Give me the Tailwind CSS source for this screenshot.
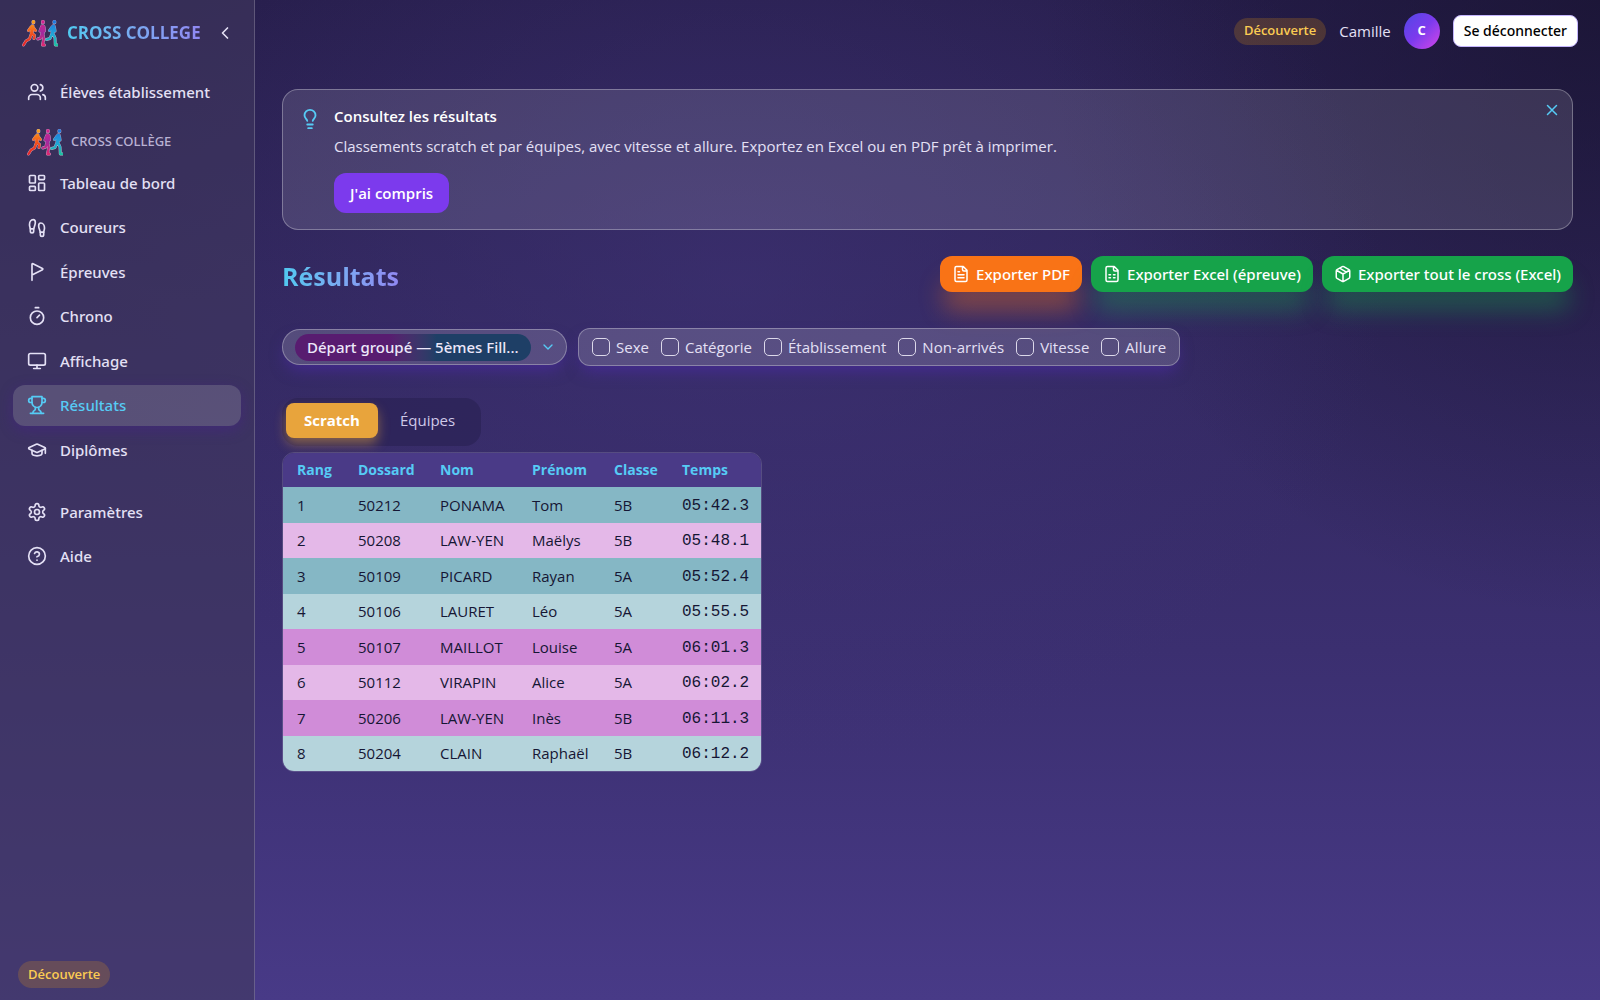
<!DOCTYPE html>
<html lang="fr">

<head>
  <meta charset="UTF-8">
  <meta name="viewport" content="width=device-width, initial-scale=1.0">
  <title>Cross Collège - Résultats</title>
  <script src="https://cdn.jsdelivr.net/npm/@tailwindcss/browser@4"></script>
</head>

<body
  class="flex min-h-screen bg-[radial-gradient(ellipse_650px_500px_at_46%_28%,#41347a88,transparent),radial-gradient(ellipse_560px_620px_at_100%_0%,#17122eaa,transparent),linear-gradient(180deg,#271e4c,#31275d_30%,#3b2f70_65%,#483a87)] font-['Open_Sans','Noto_Sans',sans-serif] text-[15px] text-[#e4e0f5]">

  <!-- icones partagées -->
  <svg class="absolute size-0" aria-hidden="true">
    <defs>
      <linearGradient id="fire" gradientUnits="userSpaceOnUse" x1="0" y1="0" x2="0" y2="28">
        <stop offset="0" stop-color="#fbb11d" />
        <stop offset=".5" stop-color="#f2541c" />
        <stop offset="1" stop-color="#e11d2e" />
      </linearGradient>
      <linearGradient id="berry" gradientUnits="userSpaceOnUse" x1="0" y1="0" x2="0" y2="28">
        <stop offset="0" stop-color="#e0218a" />
        <stop offset=".5" stop-color="#a02a9e" />
        <stop offset="1" stop-color="#e5286c" />
      </linearGradient>
      <linearGradient id="sea" gradientUnits="userSpaceOnUse" x1="0" y1="0" x2="0" y2="28">
        <stop offset="0" stop-color="#1d6fe0" />
        <stop offset=".55" stop-color="#22a5d6" />
        <stop offset="1" stop-color="#1fc79a" />
      </linearGradient>
      <path id="run1" d="M11 2.500h.8v1.200H11zM10 7l-.8 7M11 7l-.8 7M11 8l2.500 3.500M9 8l-2.500 3.500M10 14.500l2.500 2-.5 3M9.500 14.500 7.500 20 4 22l-2.500 4" />
      <path id="run2" d="M20.500 2.500h.8v1.200h-.8zM20 7l-.2 7M21.300 7v7M19.500 8 18 12M22 8l.5 4M20.800 14.500l1 5-1.300 6.500h2M19.800 14.500l-1 4.500-3 1" />
      <path id="run3" d="M32 2.500h.8v1.200H32zM31 7l-1 7M32 7l-1 7M30 8l-2.500 3.500M32.500 8.500l.5 3.500M30 14.500l-2 5-3.500 1M31 14.500l2 4.500.3 7h2" />
      <symbol id="runners" viewBox="0 0 36 28">
        <g fill="none" stroke-linecap="round" stroke-linejoin="round">
          <g stroke="#e9d3ee" stroke-opacity=".75" stroke-width="3">
            <use href="#run1" /><use href="#run2" /><use href="#run3" />
          </g>
          <g stroke-width="2.300">
            <use href="#run1" stroke="url(#fire)" />
            <use href="#run2" stroke="url(#berry)" />
            <use href="#run3" stroke="url(#sea)" />
          </g>
        </g>
      </symbol>
    </defs>
  </svg>

  <aside class="flex w-[255px] shrink-0 flex-col border-r border-white/20 bg-[#41385f]/60 px-[13px]">
    <div class="flex h-[66px] items-center gap-[9px] pl-[9px]">
      <svg class="h-7 w-9 shrink-0"><use href="#runners" /></svg>
      <span
        class="bg-linear-to-r from-[#4fc9f0] to-[#9088f2] bg-clip-text text-[17px] font-bold whitespace-nowrap text-transparent">CROSS
        COLLEGE</span>
      <button type="button" aria-label="Réduire le menu" class="ml-auto flex h-9 w-8 items-center justify-center">
        <svg class="size-5" viewBox="0 0 24 24" fill="none" stroke="currentColor" stroke-width="2"
          stroke-linecap="round" stroke-linejoin="round">
          <path d="m15 18-6-6 6-6" />
        </svg>
      </button>
    </div>

    <nav class="flex flex-col pt-1.5 font-['Noto_Sans',sans-serif] font-medium">
      <a href="#" class="flex h-10 items-center gap-[13px] rounded-xl px-3.5">
        <svg class="size-5" viewBox="0 0 24 24" fill="none" stroke="currentColor" stroke-width="2"
          stroke-linecap="round" stroke-linejoin="round">
          <path d="M16 21v-2a4 4 0 0 0-4-4H6a4 4 0 0 0-4 4v2" />
          <circle cx="9" cy="7" r="4" />
          <path d="M22 21v-2a4 4 0 0 0-3-3.870M16 3.130a4 4 0 0 1 0 7.750" />
        </svg>
        Élèves établissement
      </a>

      <div class="mt-4 flex h-7 items-center gap-2 pl-3.5 text-[13px] text-[#b9b2d3]">
        <svg class="h-7 w-9"><use href="#runners" /></svg>
        CROSS COLLÈGE
      </div>

      <div class="mt-[7px] grid h-[307px] auto-rows-fr gap-1">
        <a href="#" class="flex items-center gap-[13px] rounded-xl px-3.5">
          <svg class="size-5" viewBox="0 0 24 24" fill="none" stroke="currentColor" stroke-width="2"
            stroke-linecap="round" stroke-linejoin="round">
            <rect width="7" height="9" x="3" y="3" rx="1" />
            <rect width="7" height="5" x="14" y="3" rx="1" />
            <rect width="7" height="9" x="14" y="12" rx="1" />
            <rect width="7" height="5" x="3" y="16" rx="1" />
          </svg>
          Tableau de bord
        </a>
        <a href="#" class="flex items-center gap-[13px] rounded-xl px-3.5">
          <svg class="size-5" viewBox="0 0 24 24" fill="none" stroke="currentColor" stroke-width="2"
            stroke-linecap="round" stroke-linejoin="round">
            <path
              d="M4 16v-2.380C4 11.500 2.970 10.500 3 8c.03-2.720 1.490-6 4.500-6C9.370 2 10 3.800 10 5.500c0 3.110-2 5.660-2 8.680V16a2 2 0 1 1-4 0Z" />
            <path
              d="M20 20v-2.380c0-2.120 1.030-3.120 1-5.620-.03-2.720-1.490-6-4.500-6C14.630 6 14 7.800 14 9.500c0 3.110 2 5.660 2 8.680V20a2 2 0 1 0 4 0Z" />
            <path d="M16 17h4M4 13h4" />
          </svg>
          Coureurs
        </a>
        <a href="#" class="flex items-center gap-[13px] rounded-xl px-3.5">
          <svg class="size-5" viewBox="0 0 24 24" fill="none" stroke="currentColor" stroke-width="2"
            stroke-linecap="round" stroke-linejoin="round">
            <path d="M6 22V2.800a.8.8 0 0 1 1.170-.71l11.380 5.690a.8.8 0 0 1 0 1.440L6 15.500" />
          </svg>
          Épreuves
        </a>
        <a href="#" class="flex items-center gap-[13px] rounded-xl px-3.5">
          <svg class="size-5" viewBox="0 0 24 24" fill="none" stroke="currentColor" stroke-width="2"
            stroke-linecap="round" stroke-linejoin="round">
            <path d="M10 2h4M12 14l3-3" />
            <circle cx="12" cy="14" r="8" />
          </svg>
          Chrono
        </a>
        <a href="#" class="flex items-center gap-[13px] rounded-xl px-3.5">
          <svg class="size-5" viewBox="0 0 24 24" fill="none" stroke="currentColor" stroke-width="2"
            stroke-linecap="round" stroke-linejoin="round">
            <rect width="20" height="14" x="2" y="3" rx="2" />
            <path d="M8 21h8M12 17v4" />
          </svg>
          Affichage
        </a>
        <a href="#" aria-current="page"
          class="flex items-center gap-[13px] rounded-xl bg-white/15 px-3.5 text-[#56cbf5] shadow-[0_4px_14px_#4c1d9566]">
          <svg class="size-5" viewBox="0 0 24 24" fill="none" stroke="currentColor" stroke-width="2"
            stroke-linecap="round" stroke-linejoin="round">
            <path d="M6 9H4.500a2.500 2.500 0 0 1 0-5H6M18 9h1.500a2.500 2.500 0 0 0 0-5H18M4 22h16" />
            <path d="M10 14.660V17c0 .55-.47.980-.97 1.210C7.850 18.750 7 20.240 7 22" />
            <path d="M14 14.660V17c0 .55.470.980.970 1.210C16.150 18.750 17 20.240 17 22" />
            <path d="M18 2H6v7a6 6 0 0 0 12 0V2Z" />
          </svg>
          Résultats
        </a>
        <a href="#" class="flex items-center gap-[13px] rounded-xl px-3.5">
          <svg class="size-5" viewBox="0 0 24 24" fill="none" stroke="currentColor" stroke-width="2"
            stroke-linecap="round" stroke-linejoin="round">
            <path
              d="M21.420 10.922a1 1 0 0 0-.019-1.838L12.830 5.180a2 2 0 0 0-1.660 0L2.600 9.080a1 1 0 0 0 0 1.832l8.570 3.908a2 2 0 0 0 1.660 0z" />
            <path d="M22 10v6M6 12.500V16a6 3 0 0 0 12 0v-3.500" />
          </svg>
          Diplômes
        </a>
      </div>

      <div class="mt-[22px] flex flex-col gap-1">
        <a href="#" class="flex h-10 items-center gap-[13px] rounded-xl px-3.5">
          <svg class="size-5" viewBox="0 0 24 24" fill="none" stroke="currentColor" stroke-width="2"
            stroke-linecap="round" stroke-linejoin="round">
            <path
              d="M12.220 2h-.44a2 2 0 0 0-2 2v.18a2 2 0 0 1-1 1.730l-.43.25a2 2 0 0 1-2 0l-.15-.08a2 2 0 0 0-2.730.73l-.22.38a2 2 0 0 0 .73 2.730l.15.1a2 2 0 0 1 1 1.720v.51a2 2 0 0 1-1 1.740l-.15.09a2 2 0 0 0-.73 2.730l.22.38a2 2 0 0 0 2.730.73l.15-.08a2 2 0 0 1 2 0l.43.25a2 2 0 0 1 1 1.730V20a2 2 0 0 0 2 2h.44a2 2 0 0 0 2-2v-.18a2 2 0 0 1 1-1.730l.43-.25a2 2 0 0 1 2 0l.15.08a2 2 0 0 0 2.730-.73l.22-.39a2 2 0 0 0-.73-2.730l-.15-.08a2 2 0 0 1-1-1.740v-.5a2 2 0 0 1 1-1.740l.15-.09a2 2 0 0 0 .73-2.730l-.22-.38a2 2 0 0 0-2.730-.73l-.15.08a2 2 0 0 1-2 0l-.43-.25a2 2 0 0 1-1-1.730V4a2 2 0 0 0-2-2z" />
            <circle cx="12" cy="12" r="3" />
          </svg>
          Paramètres
        </a>
        <a href="#" class="flex h-10 items-center gap-[13px] rounded-xl px-3.5">
          <svg class="size-5" viewBox="0 0 24 24" fill="none" stroke="currentColor" stroke-width="2"
            stroke-linecap="round" stroke-linejoin="round">
            <circle cx="12" cy="12" r="10" />
            <path d="M9.090 9a3 3 0 0 1 5.830 1c0 2-3 3-3 3M12 17h.01" />
          </svg>
          Aide
        </a>
      </div>
    </nav>

    <span
      class="mt-auto mb-3 ml-[5px] flex h-[27px] items-center self-start rounded-full bg-[#f59e0b]/20 px-2.5 text-[13px] font-semibold text-[#fbcb52]">Découverte</span>
  </aside>

  <div class="flex min-w-0 grow flex-col">
    <header class="flex h-[62px] items-center justify-end gap-[13px] pr-[22px]">
      <span
        class="flex h-[27px] items-center rounded-full bg-[#f59e0b]/20 px-2.5 text-[13px] font-semibold text-[#fbcb52]">Découverte</span>
      <span>Camille</span>
      <span
        class="flex size-9 items-center justify-center rounded-full bg-linear-to-br from-[#4f46e5] via-[#7c3aed] to-[#d63fe8] text-[13px] font-bold text-white">C</span>
      <button type="button"
        class="h-8 rounded-lg border border-[#c4b5fd] bg-white px-2.5 font-['Noto_Sans',sans-serif] text-sm font-medium text-black">Se
        déconnecter</button>
    </header>

    <main class="flex flex-col px-[27px] pt-[27px]">
      <section
        class="relative flex gap-[13px] rounded-2xl border border-white/30 bg-white/12 pt-3.5 pr-12 pb-4 pl-4">
        <svg class="mt-1 size-[22px] shrink-0 text-[#56cbf5]" viewBox="0 0 24 24" fill="none" stroke="currentColor"
          stroke-width="2" stroke-linecap="round" stroke-linejoin="round">
          <path
            d="M15 14c.2-1 .7-1.700 1.500-2.500 1-.9 1.500-2.200 1.500-3.500A6 6 0 0 0 6 8c0 1 .2 2.200 1.500 3.500.7.7 1.300 1.500 1.500 2.500M9 18h6M10 22h4" />
        </svg>
        <div>
          <h2 class="leading-6 font-semibold text-white">Consultez les résultats</h2>
          <p class="mt-1.5 leading-6">Classements scratch et par équipes, avec vitesse et allure. Exportez en Excel ou
            en PDF prêt à imprimer.</p>
          <button type="button"
            class="mt-[15px] h-10 rounded-xl bg-[#7c3aed] px-4 font-semibold text-white">J'ai compris</button>
        </div>
        <button type="button" aria-label="Fermer" class="absolute top-[9px] right-[9px] p-0.5 text-[#56cbf5]">
          <svg class="size-[18px]" viewBox="0 0 24 24" fill="none" stroke="currentColor" stroke-width="2"
            stroke-linecap="round" stroke-linejoin="round">
            <path d="M18 6 6 18M6 6l12 12" />
          </svg>
        </button>
      </section>

      <div class="mt-[26px] flex items-start justify-between">
        <h1
          class="bg-linear-to-r from-[#4fc9f0] to-[#9088f2] bg-clip-text text-[25px] leading-10 font-bold text-transparent">
          Résultats</h1>
        <div class="flex gap-[9px] font-['Noto_Sans',sans-serif] font-medium text-white">
          <button type="button"
            class="flex h-9 items-center gap-[6px] rounded-xl bg-[#f97316] px-3 shadow-[0_22px_25px_-4px_#f9731666]">
            <svg class="size-[18px]" viewBox="0 0 24 24" fill="none" stroke="currentColor" stroke-width="2"
              stroke-linecap="round" stroke-linejoin="round">
              <path d="M15 2H6a2 2 0 0 0-2 2v16a2 2 0 0 0 2 2h12a2 2 0 0 0 2-2V7ZM14 2v4a2 2 0 0 0 2 2h4" />
              <path d="M10 9H8M16 13H8M16 17H8" />
            </svg>
            Exporter PDF
          </button>
          <button type="button"
            class="flex h-9 items-center gap-[6px] rounded-xl bg-[#16a34a] px-3 shadow-[0_22px_25px_-4px_#16a34a66]">
            <svg class="size-[18px]" viewBox="0 0 24 24" fill="none" stroke="currentColor" stroke-width="2"
              stroke-linecap="round" stroke-linejoin="round">
              <path d="M15 2H6a2 2 0 0 0-2 2v16a2 2 0 0 0 2 2h12a2 2 0 0 0 2-2V7ZM14 2v4a2 2 0 0 0 2 2h4" />
              <path d="M8 13h2M14 13h2M8 17h2M14 17h2" />
            </svg>
            Exporter Excel (épreuve)
          </button>
          <button type="button"
            class="flex h-9 items-center gap-[6px] rounded-xl bg-[#16a34a] px-3 shadow-[0_22px_25px_-4px_#16a34a66]">
            <svg class="size-[18px]" viewBox="0 0 24 24" fill="none" stroke="currentColor" stroke-width="2"
              stroke-linecap="round" stroke-linejoin="round">
              <path
                d="M11 21.730a2 2 0 0 0 2 0l7-4A2 2 0 0 0 21 16V8a2 2 0 0 0-1-1.730l-7-4a2 2 0 0 0-2 0l-7 4A2 2 0 0 0 3 8v8a2 2 0 0 0 1 1.730zM12 22V12M3.300 7 12 12l8.700-5M7.500 4.270l9 5.150" />
            </svg>
            Exporter tout le cross (Excel)
          </button>
        </div>
      </div>

      <div class="mt-8 flex items-center gap-[11px]">
        <div
          class="relative flex h-9 w-[285px] items-center rounded-full border border-white/30 bg-white/16 pl-3 shadow-[0_8px_16px_-4px_#4c2aaaaa]">
          <select aria-label="Épreuve"
            class="h-[27px] w-[236px] appearance-none rounded-full bg-linear-to-r from-[#581c70] from-40% to-[#1e3f66] to-60% px-3 font-['Noto_Sans',sans-serif] font-medium text-[#ece8fa]">
            <option>Départ groupé — 5èmes Fill...</option>
          </select>
          <svg class="pointer-events-none absolute right-2.5 size-4 text-[#56cbf5]" viewBox="0 0 24 24" fill="none"
            stroke="currentColor" stroke-width="2" stroke-linecap="round" stroke-linejoin="round">
            <path d="m6 9 6 6 6-6" />
          </svg>
        </div>

        <div
          class="flex h-[38px] items-center gap-3 rounded-xl border border-white/30 bg-white/16 px-[13px] shadow-[0_8px_16px_-4px_#4c2aaaaa]">
          <label class="flex items-center gap-[6px]"><input type="checkbox"
              class="size-[18px] appearance-none rounded-[5px] border border-[#dcd8ea]">Sexe</label>
          <label class="flex items-center gap-[6px]"><input type="checkbox"
              class="size-[18px] appearance-none rounded-[5px] border border-[#dcd8ea]">Catégorie</label>
          <label class="flex items-center gap-[6px]"><input type="checkbox"
              class="size-[18px] appearance-none rounded-[5px] border border-[#dcd8ea]">Établissement</label>
          <label class="flex items-center gap-[6px]"><input type="checkbox"
              class="size-[18px] appearance-none rounded-[5px] border border-[#dcd8ea]">Non-arrivés</label>
          <label class="flex items-center gap-[6px]"><input type="checkbox"
              class="size-[18px] appearance-none rounded-[5px] border border-[#dcd8ea]">Vitesse</label>
          <label class="flex items-center gap-[6px]"><input type="checkbox"
              class="size-[18px] appearance-none rounded-[5px] border border-[#dcd8ea]">Allure</label>
        </div>
      </div>

      <div class="mt-8 flex self-start rounded-2xl bg-[#2b2256]/70 px-1 pt-[5px] pb-2">
        <button type="button"
          class="h-[35px] rounded-lg bg-[#e8a43c] px-[18px] font-bold text-white shadow-[0_6px_12px_#e8a43c77]">Scratch</button>
        <button type="button" class="h-[35px] px-[22px] text-[#cfc9e8]">Équipes</button>
      </div>

      <div class="mt-1.5 w-[480px] overflow-hidden rounded-xl border border-white/15">
        <table class="h-[318px] w-full table-fixed text-left text-[#151634]">
          <thead class="bg-[#4a3a87] text-sm text-[#56cbf5]">
            <tr class="h-[34px]">
              <th scope="col" class="w-[61px] pl-3.5 font-bold">Rang</th>
              <th scope="col" class="w-[82px] pl-3.5 font-bold">Dossard</th>
              <th scope="col" class="w-[92px] pl-3.5 font-bold">Nom</th>
              <th scope="col" class="w-[82px] pl-3.5 font-bold">Prénom</th>
              <th scope="col" class="w-[68px] pl-3.5 font-bold">Classe</th>
              <th scope="col" class="pl-3.5 font-bold">Temps</th>
            </tr>
          </thead>
          <tbody id="classement"></tbody>
        </table>
      </div>
    </main>
  </div>

  <script>
    //classement scratch: dossard, nom, prenom, classe, temps, sexe
    const coureurs = [
      ['50212', 'PONAMA', 'Tom', '5B', '05:42.3', 'M'],
      ['50208', 'LAW-YEN', 'Maëlys', '5B', '05:48.1', 'F'],
      ['50109', 'PICARD', 'Rayan', '5A', '05:52.4', 'M'],
      ['50106', 'LAURET', 'Léo', '5A', '05:55.5', 'M'],
      ['50107', 'MAILLOT', 'Louise', '5A', '06:01.3', 'F'],
      ['50112', 'VIRAPIN', 'Alice', '5A', '06:02.2', 'F'],
      ['50206', 'LAW-YEN', 'Inès', '5B', '06:11.3', 'F'],
      ['50204', 'CLAIN', 'Raphaël', '5B', '06:12.2', 'M']
    ]

    //une couleur par sexe, plus foncée sur les rangs impairs
    const couleurs = {
      M: ['bg-[#85b7c5]', 'bg-[#b5d4dc]'],
      F: ['bg-[#d08cd8]', 'bg-[#e4b8e8]']
    }

    document.querySelector('#classement').innerHTML = coureurs.map(([dossard, nom, prenom, classe, temps, sexe], index) => `
      <tr class="h-[35px] ${couleurs[sexe][index % 2]}">
        <td class="pl-3.5">${index + 1}</td>
        <td class="pl-3.5">${dossard}</td>
        <td class="pl-3.5">${nom}</td>
        <td class="pl-3.5">${prenom}</td>
        <td class="pl-3.5">${classe}</td>
        <td class="pt-0.5 pl-3.5 font-['Liberation_Mono',monospace] text-base">${temps}</td>
      </tr>
    `).join('')
  </script>
</body>

</html>
